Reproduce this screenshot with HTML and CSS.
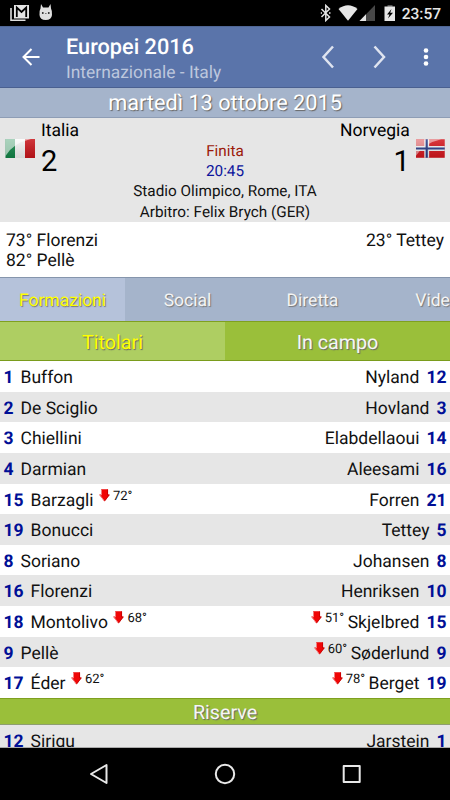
FILE: index.html
```html
<!DOCTYPE html>
<html lang="it">
<head>
    <meta charset="UTF-8">
    <meta name="viewport" content="width=device-width, initial-scale=1.0">
    <title>Europei 2016</title>
    <link rel="stylesheet" href="styles.css">
</head>
<body>
    <!-- arrow used for substituted players -->
    <svg class="defs" width="0" height="0">
        <symbol id="out" viewBox="0 0 11 13">
            <path d="M2 .3H9V5.500H10.800L5.500 12.500L.2 5.500H2Z" fill="#f00606"/>
            <path d="M2.500 .5V6H.8L5.200 11.800" fill="none" stroke="#f08080" stroke-width="1"/>
            <path d="M8.600 .5V6H10.200L5.800 11.800" fill="none" stroke="#c00000" stroke-width=".8"/>
        </symbol>
    </svg>

    <div class="screen">
        <div class="status-bar">
            <svg class="status-left" width="46" height="18" viewBox="0 0 46 18">
                <path d="M1 4V16.200H15.500" fill="none" stroke="#ddd" stroke-width="1.600"/>
                <path d="M4 1H19V14.500H4Z" fill="#e4e4e4"/>
                <path d="M6.800 13V3.500L11.500 8L16.200 3.500V13" fill="none" stroke="#000" stroke-width="1.800"/>
                <path d="M31 0L33 3.500H38.500L40.500 0L41 4.500Q42.400 7 42 11Q41.500 16 35.700 16T29.500 11Q29 7 30.500 4.500Z" fill="#e0e0e0"/>
                <circle cx="32.800" cy="9" r=".9" fill="#222"/>
                <circle cx="38.800" cy="9" r=".9" fill="#222"/>
                <path d="M35 9.500H36.600" stroke="#777" stroke-width="1"/>
            </svg>
            <div class="status-right">
                <svg width="76" height="18" viewBox="0 0 76 18">
                    <path d="M1.500 5L9.500 13L5.800 16.500V1.500L9.500 5L1.500 13" fill="none" stroke="#e4e4e4" stroke-width="1.500"/>
                    <path d="M.8 9H2M9 9H10.500" stroke="#e4e4e4" stroke-width="1.300"/>
                    <path d="M18.500 5Q28 -2.500 37.500 5L28 16.700Z" fill="#e6e6e6"/>
                    <path d="M55 1V17H39.500Z" fill="#484848"/>
                    <path d="M46 10.200V17H39.500Z" fill="#e6e6e6"/>
                    <path d="M67.500 1H72.500V3H67.500Z" fill="#555"/>
                    <path d="M64.500 2.500H75V17H64.500Z" fill="#e6e6e6"/>
                    <path d="M71.500 5L67 10.500H69.500L68 14.500L73 8.700H70.200Z" fill="#000"/>
                </svg>
                <span class="clock">23:57</span>
            </div>
        </div>

        <div class="header">
            <svg class="back" width="20" height="20" viewBox="0 0 20 20">
                <path d="M18.500 10H2.500M10.500 2L2.500 10L10.500 18" fill="none" stroke="#fff" stroke-width="2"/>
            </svg>
            <div class="titles">
                <h1>Europei 2016</h1>
                <p>Internazionale - Italy</p>
            </div>
            <svg class="actions" width="112" height="26" viewBox="0 0 112 26">
                <path d="M13 2.500L3.500 13L13 23.500M54.500 2.500L64 13L54.500 23.500" fill="none" stroke="#dfe4f0" stroke-width="2.500"/>
                <g fill="#fff">
                    <circle cx="106" cy="6.500" r="2.300"/>
                    <circle cx="106" cy="13" r="2.300"/>
                    <circle cx="106" cy="19.500" r="2.300"/>
                </g>
            </svg>
        </div>

        <div class="date">martedì 13 ottobre 2015</div>

        <div class="match">
            <div class="team">
                <svg class="flag" width="30" height="20" viewBox="0 0 30 20">
                    <defs>
                        <linearGradient id="shade" x1="0" y1="0" x2="0" y2="1">
                            <stop offset="0" stop-color="#fff" stop-opacity=".15"/>
                            <stop offset="1" stop-color="#000" stop-opacity=".12"/>
                        </linearGradient>
                    </defs>
                    <path d="M.5 0H10V19H.5Z" fill="#128447"/>
                    <path d="M10 0H20V19H10Z" fill="#f4f4f4"/>
                    <path d="M20 0H30V19H20Z" fill="#c9151b"/>
                    <path d="M.5 0H30V19H.5Z" fill="url(#shade)"/>
                    <path d="M.5 0H26Q8 4 .5 17Z" fill="#fff" opacity=".58"/>
                </svg>
                <div class="team-text">
                    <div class="name">Italia</div>
                    <div class="score">2</div>
                </div>
            </div>
            <div class="info">
                <div class="state">Finita</div>
                <div class="time">20:45</div>
                <div>Stadio Olimpico, Rome, ITA</div>
                <div>Arbitro: Felix Brych (GER)</div>
            </div>
            <div class="team away">
                <div class="team-text">
                    <div class="name">Norvegia</div>
                    <div class="score">1</div>
                </div>
                <svg class="flag" width="30" height="20" viewBox="0 0 30 20">
                    <path d="M0 0H29.500V19H0Z" fill="#d5161d"/>
                    <path d="M0 9.500H29.500M11 0V19" stroke="#f0f0f5" stroke-width="5"/>
                    <path d="M0 0H26Q8 4 0 17Z" fill="#fff" opacity=".5"/>
                    <path d="M0 9.500H29.500M11 0V19" stroke="#273b86" stroke-width="2.200"/>
                    <path d="M0 0H29.500V19H0Z" fill="url(#shade)"/>
                </svg>
            </div>
        </div>

        <div class="scorers">
            <div>73° Florenzi<br>82° Pellè</div>
            <div>23° Tettey</div>
        </div>

        <div class="tabs">
            <div class="tab active">Formazioni</div>
            <div class="tab">Social</div>
            <div class="tab">Diretta</div>
            <div class="tab">Video</div>
        </div>

        <div class="subtabs">
            <div class="subtab active">Titolari</div>
            <div class="subtab">In campo</div>
        </div>

        <div class="lineup">
            <div class="row"><div class="player"><b>1</b>Buffon</div><div class="player">Nyland<b>12</b></div></div>
            <div class="row"><div class="player"><b>2</b>De Sciglio</div><div class="player">Hovland<b>3</b></div></div>
            <div class="row"><div class="player"><b>3</b>Chiellini</div><div class="player">Elabdellaoui<b>14</b></div></div>
            <div class="row"><div class="player"><b>4</b>Darmian</div><div class="player">Aleesami<b>16</b></div></div>
            <div class="row"><div class="player"><b>15</b>Barzagli<span class="sub"><svg><use href="#out"/></svg>72°</span></div><div class="player">Forren<b>21</b></div></div>
            <div class="row"><div class="player"><b>19</b>Bonucci</div><div class="player">Tettey<b>5</b></div></div>
            <div class="row"><div class="player"><b>8</b>Soriano</div><div class="player">Johansen<b>8</b></div></div>
            <div class="row"><div class="player"><b>16</b>Florenzi</div><div class="player">Henriksen<b>10</b></div></div>
            <div class="row"><div class="player"><b>18</b>Montolivo<span class="sub"><svg><use href="#out"/></svg>68°</span></div><div class="player"><span class="sub"><svg><use href="#out"/></svg>51°</span>Skjelbred<b>15</b></div></div>
            <div class="row"><div class="player"><b>9</b>Pellè</div><div class="player"><span class="sub"><svg><use href="#out"/></svg>60°</span>Søderlund<b>9</b></div></div>
            <div class="row"><div class="player"><b>17</b>Éder<span class="sub"><svg><use href="#out"/></svg>62°</span></div><div class="player"><span class="sub"><svg><use href="#out"/></svg>78°</span>Berget<b>19</b></div></div>
        </div>

        <div class="section">Riserve</div>
        <div class="bench">
            <div class="row grey"><div class="player"><b>12</b>Sirigu</div><div class="player">Jarstein<b>1</b></div></div>
        </div>

        <div class="nav-bar">
            <svg width="274" height="24" viewBox="0 0 274 24" fill="none" stroke="#e8e8e8" stroke-width="2" stroke-linejoin="round">
                <path d="M18.500 3V21L3 12Z"/>
                <circle cx="137" cy="12" r="9.200"/>
                <path d="M255.700 4H271.700V20H255.700Z"/>
            </svg>
        </div>
    </div>
</body>
</html>
```

FILE: styles.css
```css
* {
    margin: 0;
    padding: 0;
    box-sizing: border-box;
}

body {
    font-family: Roboto, sans-serif;
    text-rendering: geometricPrecision;
    background: #000;
    color: #111;
}

.defs {
    display: none;
}

.screen {
    width: 450px;
    height: 800px;
    overflow: hidden;
    display: flex;
    flex-direction: column;
    background: #fff;
}

.screen > div {
    flex-shrink: 0;
}

.status-bar {
    height: 26px;
    background: #000;
    display: flex;
    justify-content: space-between;
    align-items: center;
    padding: 0 9px 0 10px;
}

.status-right {
    display: flex;
    align-items: center;
    gap: 6px;
}

.clock {
    color: #e6e6e6;
    font-size: 15.500px;
    font-weight: 500;
    line-height: 18px;
    padding-top: 2px;
}

.header {
    height: 62px;
    background: #5a74aa;
    border-top: 1px solid #4f6694;
    border-bottom: 1px solid #4a6090;
    display: flex;
    align-items: center;
    padding: 0 18px 0 21px;
}

.titles {
    flex: 1;
    margin-left: 25px;
    padding-top: 4px;
}

.titles h1 {
    color: #fff;
    font-size: 21.700px;
    font-weight: 500;
    line-height: 27px;
}

.titles p {
    color: #bdc7dd;
    font-size: 17.400px;
    line-height: 24px;
}

.date {
    height: 30px;
    background: #a5b4cb;
    border-bottom: 1px solid #8e9db5;
    color: #fff;
    font-size: 21.700px;
    line-height: 32px;
    text-align: center;
    text-shadow: 1px 1px 1px #666;
}

.match {
    height: 104px;
    background: #e6e6e6;
    display: flex;
    justify-content: space-between;
    padding: 0 5px;
}

.team {
    display: flex;
    gap: 6px;
    width: 105px;
}

.away {
    justify-content: flex-end;
    text-align: right;
}

.flag {
    margin-top: 21px;
}

.name {
    font-size: 17.500px;
    line-height: 26px;
    color: #000;
}

.score {
    font-size: 29px;
    line-height: 37px;
    color: #000;
}

.info {
    padding-top: 23px;
    font-size: 15.300px;
    line-height: 20.200px;
    text-align: center;
    white-space: nowrap;
}

.state {
    color: #9c1a0a;
}

.time {
    color: #0c149c;
}

.scorers {
    height: 55px;
    display: flex;
    justify-content: space-between;
    padding: 9px 6px 0;
    font-size: 17.500px;
    line-height: 20.400px;
}

.tabs {
    height: 44px;
    display: flex;
    background: #a5b4cb;
    border-top: 1px solid #8595ac;
    overflow: hidden;
}

.tab {
    flex: 0 0 125px;
    color: #f4f4f4;
    font-size: 17.500px;
    line-height: 46px;
    text-align: center;
    text-shadow: 1px 1px 1px #777;
}

.tab.active {
    background: #b5c2da;
    color: #ff0;
}

.subtabs {
    height: 40px;
    display: flex;
    background: #9abf3a;
    border-top: 1px solid #7fa020;
    border-bottom: 1px solid #7a9c1c;
}

.subtab {
    flex: 1;
    color: #f6f6f6;
    font-size: 19.700px;
    line-height: 41px;
    text-align: center;
    text-shadow: 1px 1px 1px #666;
}

.subtab.active {
    background: #aece62;
    color: #ff0;
}

.lineup {
    height: 337px;
    display: grid;
    grid-template-rows: repeat(11, minmax(0, 1fr));
}

.row {
    display: flex;
    justify-content: space-between;
    padding: 0 3.500px;
    font-size: 17.500px;
    line-height: 34px;
}

.row:nth-child(even),
.row.grey {
    background: #e6e6e6;
}

.player {
    display: flex;
    gap: 7px;
}

.player b {
    color: #000f96;
    font-weight: 700;
}

.sub {
    display: flex;
    gap: 3px;
    font-size: 13px;
    line-height: 26px;
    margin: 0 -3.500px 0 -1.500px;
}

.sub svg {
    width: 11px;
    height: 13px;
    margin-top: 5px;
}

.section {
    height: 27px;
    background: #9abf3a;
    border-top: 1px solid #7fa020;
    border-bottom: 1px solid #8e9e70;
    color: #f6f6f6;
    font-size: 19.700px;
    line-height: 28px;
    text-align: center;
    text-shadow: 1px 1px 1px #666;
}

.bench {
    height: 23px;
    overflow: hidden;
    border-bottom: 1px solid #aaa;
}

.nav-bar {
    height: 52px;
    background: #000;
    display: flex;
    align-items: center;
    justify-content: center;
}
```
